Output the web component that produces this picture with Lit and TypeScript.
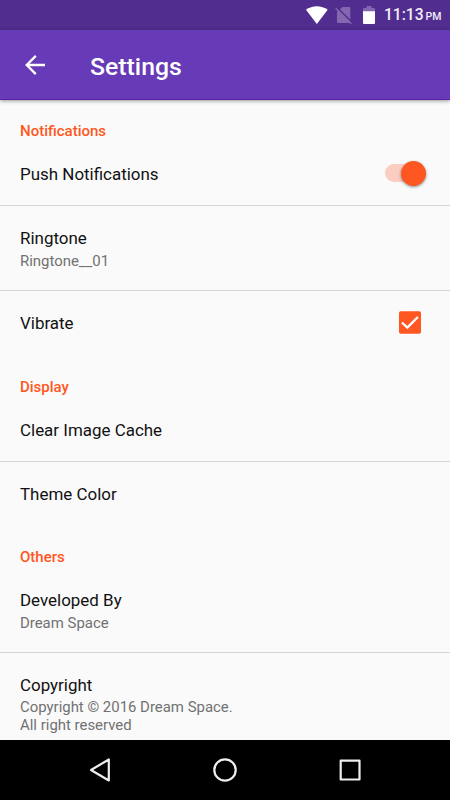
import { LitElement, html, css } from "lit";
import { customElement } from "lit/decorators.js";

@customElement("app-root")
class AppRoot extends LitElement {
  static styles = css`
    :host { display: flex; flex-direction: column; width: 450px; height: 800px; overflow: hidden; background: #fafafa; font-family: Roboto, sans-serif; color: #111; }
    * { box-sizing: border-box; }
    svg { display: block; flex: none; }
    .status { flex: none; height: 30px; background: #512d8f; display: flex; justify-content: flex-end; align-items: center; }
    .time { display: flex; align-items: baseline; gap: 2px; width: 66px; padding: 2px 0 0 0; color: #f3eff8; font-size: 15.6px; line-height: 29px; font-weight: 500; }
    .time small { font-size: 10.5px; }
    .icons { margin-right: 8px; }
    .bar { flex: none; height: 70px; background: #673ab7; display: flex; align-items: center; z-index: 1; border-bottom: 1px solid #5a1fa8; box-shadow: 0 1px 4px rgba(0,0,0,.4); }
    .back { width: 90px; }
    h1 { margin: 0; padding-top: 5px; font-size: 24.8px; line-height: 32px; font-weight: 500; color: #fff; }
    .list { flex: 1; min-height: 0; overflow: hidden; }
    .head { color: #ff5722; font-weight: 500; font-size: 15px; line-height: 20px; height: 42px; padding: 21px 20px 0; }
    .row { display: flex; justify-content: space-between; align-items: center; height: 64px; padding: 0 20px; font-size: 16.95px; line-height: 22px; }
    .row.check { height: 65px; padding-bottom: 1px; }
    .line { border-bottom: 1px solid #d6d6d6; }
    .two { height: 85px; }
    .tall { height: 105px; align-items: flex-start; padding-top: 21px; }
    .sub { font-size: 14.93px; line-height: 18px; color: #717171; white-space: pre-line; padding-top: 3px; margin-bottom: -1px; }
    .tall .sub { padding-top: 2px; }
    .switch { position: relative; width: 39px; height: 18px; margin: 0 6px 2px 0; border-radius: 9px; background: #fbcdc0; }
    .thumb { position: absolute; right: -1.7px; top: -3px; width: 25px; height: 25px; border-radius: 50%; background: #ff5722; box-shadow: 0 1px 3px rgba(0,0,0,.45); }
    .box { margin: -1px 8px 0 0; }
    .nav { flex: none; height: 60px; background: #000; }
  `;
  render() {
    return html`
      <div class="status">
        <svg class="icons" width="70" height="30" viewBox="306 0 70 30">
          <path d="M306 9.800C312 4.900 321.500 4.900 327.700 9.800L316.850 23.900Z" fill="#fff"/>
          <path d="M342.500 7H349Q350.300 7 350.300 8.300V23H338.300Q337 23 337 21.700V12Z" fill="#8567b1"/>
          <path d="M336.500 7L352.500 22.800" stroke="#512d8f" stroke-width="1.500"/>
          <path d="M335.700 8.200L351.300 23.700" stroke="#8567b1" stroke-width="1.300"/>
          <path d="M366.500 6H371.500V8H374Q375 8 375 9V12H363V9Q363 8 364 8H366.500Z" fill="#8567b1"/>
          <path d="M363 11.200H375V23Q375 24 374 24H364Q363 24 363 23Z" fill="#fff"/>
        </svg>
        <div class="time"><span>11:13</span><small>PM</small></div>
      </div>
      <div class="bar">
        <div class="back"><svg width="90" height="70" viewBox="0 30 90 70"><path d="M45 65H27M35.800 55.900L26.700 65L35.800 74.100" fill="none" stroke="#fff" stroke-width="2.300"/></svg></div>
        <h1>Settings</h1>
      </div>
      <div class="list">
        <div class="head">Notifications</div>
        <div class="row line">Push Notifications<div class="switch"><div class="thumb"></div></div></div>
        <div class="row two line"><div>Ringtone<div class="sub">Ringtone__01</div></div></div>
        <div class="row check">Vibrate
          <svg class="box" width="23" height="23" viewBox="0 0 23 23"><rect y=".3" width="22" height="22.400" rx="1.800" fill="#ff5722"/><path d="M3 11.500L8.300 16.600L18.900 6" fill="none" stroke="#fff" stroke-width="2.300"/></svg>
        </div>
        <div class="head">Display</div>
        <div class="row line">Clear Image Cache</div>
        <div class="row">Theme Color</div>
        <div class="head">Others</div>
        <div class="row two line"><div>Developed By<div class="sub">Dream Space</div></div></div>
        <div class="row tall"><div>Copyright<div class="sub">Copyright © 2016 Dream Space.
All right reserved</div></div></div>
      </div>
      <svg class="nav" width="450" height="60" viewBox="0 740 450 60" fill="none" stroke="#eee" stroke-width="2.200" stroke-linejoin="round">
        <path d="M108.800 759.500V780.500L91 770Z"/>
        <circle cx="225" cy="770" r="10.700"/>
        <rect x="340.700" y="760.700" width="18.800" height="18.800"/>
      </svg>`;
  }
}
